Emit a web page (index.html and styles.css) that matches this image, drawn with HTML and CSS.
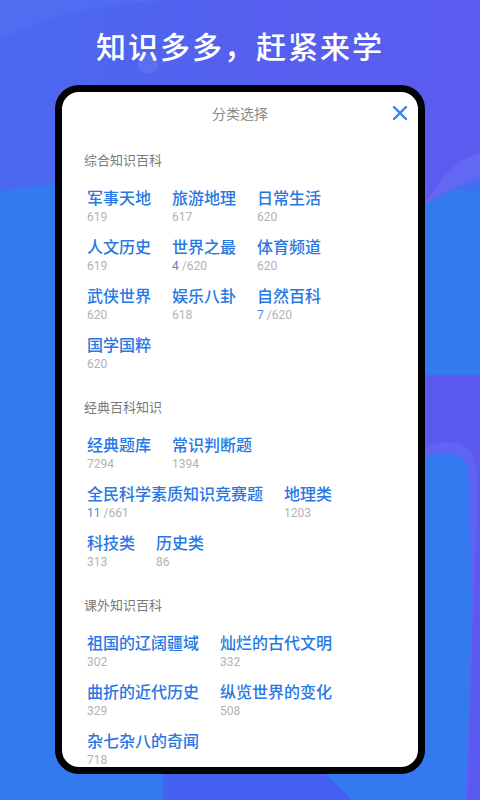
FILE: index.html
```html
<!DOCTYPE html>
<html lang="zh-CN">
<head>
    <meta charset="UTF-8">
    <meta name="viewport" content="width=device-width, initial-scale=1.0">
    <title>知识多多</title>
    <link rel="stylesheet" href="styles.css">
</head>
<body>
    <!-- background shapes -->
    <svg class="bg" viewBox="0 0 480 800" preserveAspectRatio="none">
        <defs>
            <linearGradient id="topGrad" x1="0" y1="0" x2="1" y2="0">
                <stop offset="0" stop-color="#4b69f0"/>
                <stop offset="1" stop-color="#5a58ef"/>
            </linearGradient>
        </defs>
        <rect width="480" height="800" fill="#3379ef"/>
        <path d="M0 0 H480 V178 C450 186 430 198 410 210 L60 185 C30 186 10 188 0 191 Z" fill="url(#topGrad)"/>
        <path d="M0 40 C60 10 120 0 200 0 L0 0 Z" fill="#5271f2" opacity="0.6"/>
        <path d="M210 0 C215 60 200 140 210 190 L480 190 L480 0 Z" fill="#5a5ff0" opacity="0.5"/>
        <path d="M420 208 C440 185 450 160 480 153 L480 178 C455 186 440 196 420 208 Z" fill="#6268f2"/>
        <circle cx="148" cy="64" r="10" fill="#6a7df4" opacity="0.45"/>
        <rect x="420" y="375" width="60" height="425" fill="#5a5af0"/>
        <path d="M420 452 C432 440 455 438 470 450 C480 470 478 500 476 540 C472 620 470 720 467 800 H420 Z" fill="#6064f2"/>
        <path d="M420 460 C440 448 458 452 468 465 C474 600 470 700 465 800 H420 Z" fill="#3379ef"/>
        <path d="M163 772 H323 L352 800 H163 Z" fill="#4561f1"/>
    </svg>

    <h1 class="slogan">知识多多，赶紧来学</h1>

    <div class="phone">
        <div class="sheet-head">
            <span></span>
            <span class="sheet-title">分类选择</span>
            <button class="close" aria-label="关闭">
                <svg width="16" height="16" viewBox="0 0 16 16">
                    <path d="M2 2 L14 14 M14 2 L2 14" stroke="#3381ee" stroke-width="2.4" stroke-linecap="round"/>
                </svg>
            </button>
        </div>

        <section class="group">
            <h2 class="group-title">综合知识百科</h2>
            <div class="items">
                <div class="item"><div class="item-name">军事天地</div><div class="item-count">619</div></div>
                <div class="item"><div class="item-name">旅游地理</div><div class="item-count">617</div></div>
                <div class="item"><div class="item-name">日常生活</div><div class="item-count">620</div></div>
                <div class="item"><div class="item-name">人文历史</div><div class="item-count">619</div></div>
                <div class="item"><div class="item-name">世界之最</div><div class="item-count"><span class="done">4</span> /620</div></div>
                <div class="item"><div class="item-name">体育频道</div><div class="item-count">620</div></div>
                <div class="item"><div class="item-name">武侠世界</div><div class="item-count">620</div></div>
                <div class="item"><div class="item-name">娱乐八卦</div><div class="item-count">618</div></div>
                <div class="item"><div class="item-name">自然百科</div><div class="item-count"><span class="done">7</span> /620</div></div>
                <div class="item"><div class="item-name">国学国粹</div><div class="item-count">620</div></div>
            </div>
        </section>

        <section class="group">
            <h2 class="group-title">经典百科知识</h2>
            <div class="items">
                <div class="item"><div class="item-name">经典题库</div><div class="item-count">7294</div></div>
                <div class="item"><div class="item-name">常识判断题</div><div class="item-count">1394</div></div>
                <div class="item"><div class="item-name">全民科学素质知识竞赛题</div><div class="item-count"><span class="done">11</span> /661</div></div>
                <div class="item"><div class="item-name">地理类</div><div class="item-count">1203</div></div>
                <div class="item"><div class="item-name">科技类</div><div class="item-count">313</div></div>
                <div class="item"><div class="item-name">历史类</div><div class="item-count">86</div></div>
            </div>
        </section>

        <section class="group">
            <h2 class="group-title">课外知识百科</h2>
            <div class="items">
                <div class="item"><div class="item-name">祖国的辽阔疆域</div><div class="item-count">302</div></div>
                <div class="item"><div class="item-name">灿烂的古代文明</div><div class="item-count">332</div></div>
                <div class="item"><div class="item-name">曲折的近代历史</div><div class="item-count">329</div></div>
                <div class="item"><div class="item-name">纵览世界的变化</div><div class="item-count">508</div></div>
                <div class="item"><div class="item-name">杂七杂八的奇闻</div><div class="item-count">718</div></div>
            </div>
        </section>
    </div>
</body>
</html>
```

FILE: styles.css
```css
* {
    margin: 0;
    padding: 0;
    box-sizing: border-box;
}

body {
    width: 480px;
    height: 800px;
    overflow: hidden;
    position: relative;
    font-family: "Roboto", "Noto Sans CJK SC", sans-serif;
    background-color: #3379ef;
}

.bg {
    position: absolute;
    left: 0;
    top: 0;
    width: 480px;
    height: 800px;
    z-index: 0;
}

.slogan {
    position: relative;
    padding-top: 28px;
    text-align: center;
    color: #fff;
    font-family: "Noto Sans CJK SC", sans-serif;
    font-size: 30px;
    line-height: 34px;
    font-weight: 500;
    letter-spacing: 2px;
}

.phone {
    position: relative;
    width: 370px;
    height: 689px;
    margin: 23px auto 0;
    border: 7px solid #000;
    border-radius: 24px;
    background-color: #fff;
    overflow: hidden;
}

.sheet-head {
    display: grid;
    grid-template-columns: 1fr auto 1fr;
    align-items: center;
    height: 42px;
}

.sheet-title {
    font-family: "Noto Sans CJK SC", sans-serif;
    font-size: 14px;
    color: #8a8a8a;
}

.close {
    justify-self: end;
    margin-right: 10px;
    width: 16px;
    height: 16px;
    border: none;
    background: none;
    display: flex;
}

.group {
    padding: 17px 40px 9px 22px;
}

.group-title {
    font-family: "Noto Sans CJK SC", sans-serif;
    font-size: 13px;
    line-height: 18px;
    font-weight: 400;
    color: #7a7a7a;
    margin-bottom: 16px;
}

.items {
    display: flex;
    flex-wrap: wrap;
    column-gap: 21px;
    row-gap: 9px;
    padding-left: 3px;
}

.item-name {
    font-family: "Noto Sans CJK SC", sans-serif;
    font-size: 16px;
    line-height: 24px;
    font-weight: 500;
    color: #2878e4;
}

.item-count {
    font-size: 12px;
    line-height: 16px;
    color: #b2b2b2;
}

.item-count .done {
    color: #4a88e6;
}
```
